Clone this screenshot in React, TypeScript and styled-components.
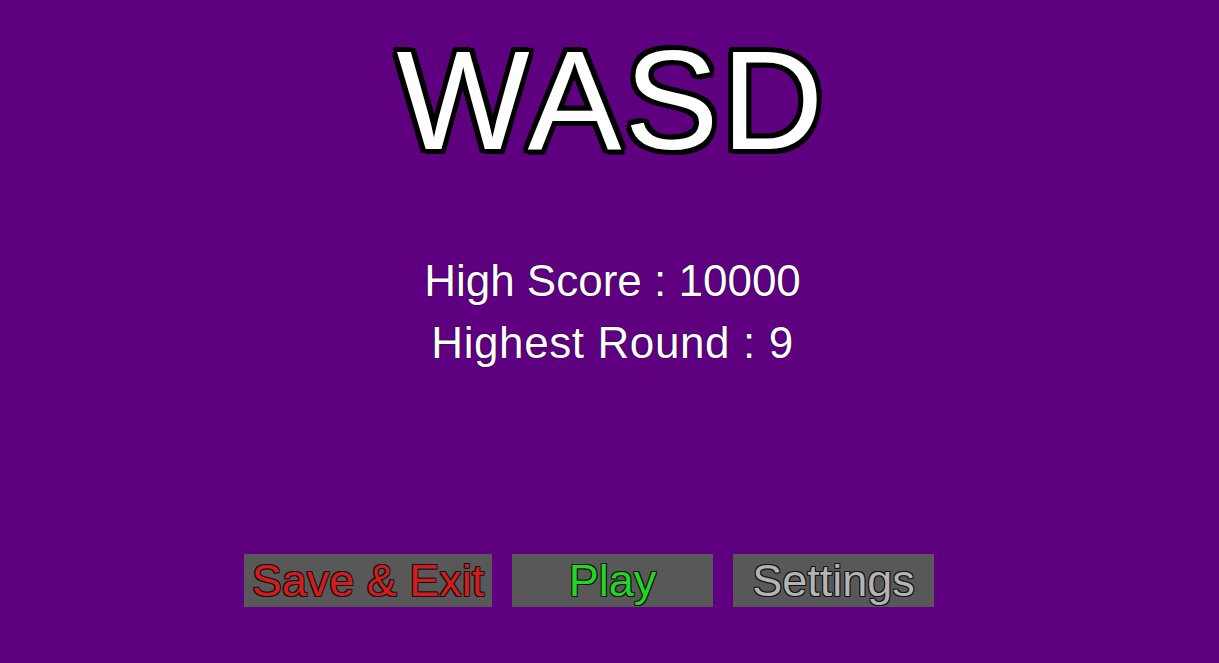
import styled, { createGlobalStyle } from 'styled-components';

const GlobalStyle = createGlobalStyle`
    html, body {
        margin: 0;
        padding: 0;
        background: #5f0080;
    }
    body {
        font-family: 'Liberation Sans', Arial, sans-serif;
    }
`;

const Screen = styled.div`
    display: flex;
    flex-direction: column;
    align-items: center;
    height: 663px;
    width: 100%;
    box-sizing: border-box;
    padding: 30px 0 56px;
    background: #5f0080;
    overflow: hidden;
`;

const Title = styled.h1`
    margin: 0;
    font-size: 141px;
    line-height: 1;
    font-weight: 400;
    color: #ffffff;
    letter-spacing: 3px;
    transform: translateX(2px);
    text-shadow:
        -4px -4px 0 #000, 4px -4px 0 #000, -4px 4px 0 #000, 4px 4px 0 #000,
        0 -5px 0 #000, 0 5px 0 #000, -5px 0 0 #000, 5px 0 0 #000,
        -3px -5px 0 #000, 3px 5px 0 #000, -5px 3px 0 #000, 5px -3px 0 #000;
`;

const Stats = styled.div`
    display: flex;
    flex-direction: column;
    align-items: center;
    margin-top: 79px;
    transform: translateX(3px);
`;

const StatLine = styled.div<{ $spacing?: number }>`
    font-size: 44px;
    line-height: 62px;
    color: #ffffff;
    letter-spacing: ${props => props.$spacing ?? 0}px;
    text-shadow: 0 0 1px #1a0025, 0 0 1px #1a0025;
`;

const ButtonRow = styled.div`
    display: flex;
    gap: 20px;
    margin-top: auto;
    padding-right: 41px;
`;

const MenuButton = styled.button<{ $width: number; $color: string }>`
    width: ${props => props.$width}px;
    height: 53px;
    padding: 0;
    border: none;
    background: #585858;
    font-family: 'Liberation Sans', Arial, sans-serif;
    font-size: 45px;
    line-height: 53px;
    color: ${props => props.$color};
    cursor: pointer;
    text-shadow: -1px -1px 0 #111, 1px -1px 0 #111, -1px 1px 0 #111, 1px 1px 0 #111;
    white-space: nowrap;
    overflow: hidden;
`;

const App = () => {
    const buttons = [
        { label: 'Save & Exit', width: 248, color: '#d41c1c' },
        { label: 'Play', width: 201, color: '#22d622' },
        { label: 'Settings', width: 201, color: '#b4b4b4' },
    ];
    return (
        <>
            <GlobalStyle />
            <Screen>
                <Title>WASD</Title>
                <Stats>
                    <StatLine>High Score : 10000</StatLine>
                    <StatLine $spacing={0.6}>Highest Round : 9</StatLine>
                </Stats>
                <ButtonRow>
                    {buttons.map(button => (
                        <MenuButton key={button.label} $width={button.width} $color={button.color}>
                            {button.label}
                        </MenuButton>
                    ))}
                </ButtonRow>
            </Screen>
        </>
    );
};

export default App;
